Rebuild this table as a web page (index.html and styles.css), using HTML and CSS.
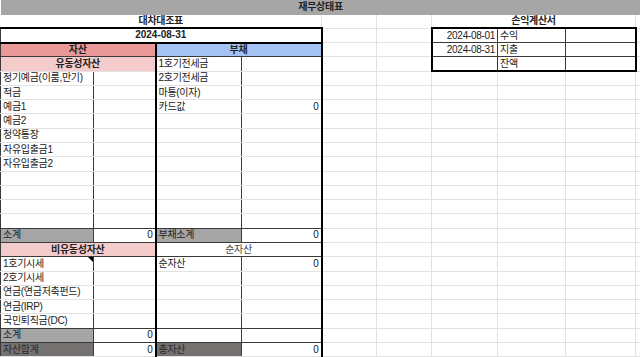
FILE: index.html
```html
<!DOCTYPE html>
<html lang="ko">
<head>
<meta charset="utf-8">
<title>재무상태표</title>
<link rel="stylesheet" href="styles.css">
</head>
<body>
<table class="sheet">
  <colgroup>
    <col class="w-a"><col class="w-b"><col class="w-c"><col class="w-d"><col class="w-e"><col class="w-f"><col class="w-g"><col class="w-h"><col class="w-i"><col class="w-j">
  </colgroup>
  <tr class="r-top"><td colspan="10" class="top">재무상태표</td></tr>
  <tr><td colspan="4" class="ttl">대차대조표</td><td></td><td></td><td colspan="3" class="ttl">손익계산서</td><td></td></tr>
  <tr><td colspan="4" class="date">2024-08-31</td><td></td><td></td><td class="pg num">2024-08-01</td><td class="ph">수익</td><td class="pi"></td><td></td></tr>
  <tr><td colspan="2" class="asset">자산</td><td colspan="2" class="debt">부채</td><td></td><td></td><td class="pg num">2024-08-31</td><td class="ph">지출</td><td class="pi"></td><td></td></tr>
  <tr><td colspan="2" class="sub">유동성자산</td><td class="c">1호기전세금</td><td class="d"></td><td></td><td></td><td class="pg pb"></td><td class="ph pb">잔액</td><td class="pi pb"></td><td></td></tr>
  <tr><td class="a">정기예금(이룸,만기)</td><td class="b"></td><td class="c">2호기전세금</td><td class="d"></td><td></td><td></td><td></td><td></td><td></td><td></td></tr>
  <tr><td class="a">적금</td><td class="b"></td><td class="c">마통(이자)</td><td class="d"></td><td></td><td></td><td></td><td></td><td></td><td></td></tr>
  <tr><td class="a">예금1</td><td class="b"></td><td class="c">카드값</td><td class="d num">0</td><td></td><td></td><td></td><td></td><td></td><td></td></tr>
  <tr><td class="a">예금2</td><td class="b"></td><td class="c"></td><td class="d"></td><td></td><td></td><td></td><td></td><td></td><td></td></tr>
  <tr><td class="a">청약통장</td><td class="b"></td><td class="c"></td><td class="d"></td><td></td><td></td><td></td><td></td><td></td><td></td></tr>
  <tr><td class="a">자유입출금1</td><td class="b"></td><td class="c"></td><td class="d"></td><td></td><td></td><td></td><td></td><td></td><td></td></tr>
  <tr><td class="a">자유입출금2</td><td class="b"></td><td class="c"></td><td class="d"></td><td></td><td></td><td></td><td></td><td></td><td></td></tr>
  <tr><td class="a"></td><td class="b"></td><td class="c"></td><td class="d"></td><td></td><td></td><td></td><td></td><td></td><td></td></tr>
  <tr><td class="a"></td><td class="b"></td><td class="c"></td><td class="d"></td><td></td><td></td><td></td><td></td><td></td><td></td></tr>
  <tr><td class="a"></td><td class="b"></td><td class="c"></td><td class="d"></td><td></td><td></td><td></td><td></td><td></td><td></td></tr>
  <tr class="rb"><td class="a"></td><td class="b"></td><td class="c"></td><td class="d"></td><td></td><td></td><td></td><td></td><td></td><td></td></tr>
  <tr class="rb"><td class="a gray">소계</td><td class="b num">0</td><td class="c gray">부채소계</td><td class="d num">0</td><td></td><td></td><td></td><td></td><td></td><td></td></tr>
  <tr class="rb"><td colspan="2" class="sub">비유동성자산</td><td colspan="2" class="net">순자산</td><td></td><td></td><td></td><td></td><td></td><td></td></tr>
  <tr><td class="a note">1호기시세</td><td class="b"></td><td class="c">순자산</td><td class="d num">0</td><td></td><td></td><td></td><td></td><td></td><td></td></tr>
  <tr><td class="a">2호기시세</td><td class="b"></td><td class="c"></td><td class="d"></td><td></td><td></td><td></td><td></td><td></td><td></td></tr>
  <tr><td class="a">연금(연금저축펀드)</td><td class="b"></td><td class="c"></td><td class="d"></td><td></td><td></td><td></td><td></td><td></td><td></td></tr>
  <tr><td class="a">연금(IRP)</td><td class="b"></td><td class="c"></td><td class="d"></td><td></td><td></td><td></td><td></td><td></td><td></td></tr>
  <tr class="rb"><td class="a">국민퇴직금(DC)</td><td class="b"></td><td class="c"></td><td class="d"></td><td></td><td></td><td></td><td></td><td></td><td></td></tr>
  <tr class="rb"><td class="a gray">소계</td><td class="b num">0</td><td class="c"></td><td class="d"></td><td></td><td></td><td></td><td></td><td></td><td></td></tr>
  <tr><td class="a dgray">자산합계</td><td class="b num">0</td><td class="c dgray">총자산</td><td class="d num">0</td><td></td><td></td><td></td><td></td><td></td><td></td></tr>
</table>
</body>
</html>
```
FILE: styles.css
```css
html, body {
  margin: 0;
  padding: 0;
  background: #fff;
}

.sheet {
  width: 640px;
  table-layout: fixed;
  border-collapse: collapse;
  font-family: "Liberation Sans", "Noto Sans CJK KR", sans-serif;
  font-size: 10px;
  letter-spacing: -0.3px;
  color: #222;
}

.w-a { width: 93px; }
.w-b { width: 62px; }
.w-c { width: 86px; }
.w-d { width: 80px; }
.w-e { width: 55px; }
.w-f { width: 55px; }
.w-g { width: 66px; }
.w-h { width: 68px; }
.w-i { width: 70px; }
.w-j { width: 5px; }

.sheet tr { height: 14.29px; }
.sheet tr.r-top { height: 14px; }

.sheet td {
  border: 1px solid #e2e2e2;
  padding: 0 2px;
  line-height: 12px;
  white-space: nowrap;
  overflow: hidden;
  vertical-align: middle;
}

.sheet td.top {
  background: #a6a6a6;
  border: 0;
  border-bottom: 1px solid #a6a6a6;
  text-align: center;
  font-weight: bold;
  color: #222;
}

.sheet td.ttl {
  border-left: 0;
  border-bottom: 2px solid #000;
  text-align: center;
  font-weight: bold;
}

.sheet td.date {
  border-left: 1px solid #3a3a3a;
  border-right: 2px solid #000;
  border-bottom: 2px solid #000;
  text-align: center;
  font-weight: bold;
  letter-spacing: 0;
}

.sheet td.asset {
  background: #ea9999;
  border-left: 1px solid #3a3a3a;
  border-right: 2px solid #000;
  border-bottom: 1px solid #3a3a3a;
  text-align: center;
  font-weight: bold;
}

.sheet td.debt {
  background: #a4c2f4;
  border-right: 2px solid #000;
  border-bottom: 1px solid #3a3a3a;
  text-align: center;
  font-weight: bold;
}

.sheet td.sub {
  background: #f4cccc;
  border-left: 1px solid #3a3a3a;
  border-right: 2px solid #000;
  text-align: center;
  font-weight: bold;
}

.sheet td.net {
  border-right: 2px solid #000;
  text-align: center;
  color: #444;
}

.sheet td.a {
  border-left: 1px solid #3a3a3a;
  border-right: 1px solid #3a3a3a;
}
.sheet td.b { border-right: 2px solid #000; }
.sheet td.c { border-right: 1px solid #3a3a3a; }
.sheet td.d { border-right: 2px solid #000; }

.sheet tr.rb td.a,
.sheet tr.rb td.b,
.sheet tr.rb td.c,
.sheet tr.rb td.d,
.sheet tr.rb td.sub,
.sheet tr.rb td.net {
  border-bottom: 1px solid #3a3a3a;
}

.sheet td.pg {
  border-left: 2px solid #000;
  border-right: 1px solid #3a3a3a;
  border-bottom: 1px solid #3a3a3a;
}
.sheet td.ph {
  border-right: 1px solid #3a3a3a;
  border-bottom: 1px solid #3a3a3a;
}
.sheet td.pi {
  border-right: 2px solid #000;
  border-bottom: 1px solid #3a3a3a;
}
.sheet td.pb { border-bottom: 2px solid #000; }

.sheet td.num { text-align: right; }

.sheet td.gray { background: #a5a5a5; }
.sheet td.dgray { background: #767171; color: #2a2a2a; }

.sheet td.note { position: relative; }
.sheet td.note::after {
  content: "";
  position: absolute;
  top: 0;
  right: 0;
  border-top: 5px solid #000;
  border-left: 5px solid transparent;
}
```
